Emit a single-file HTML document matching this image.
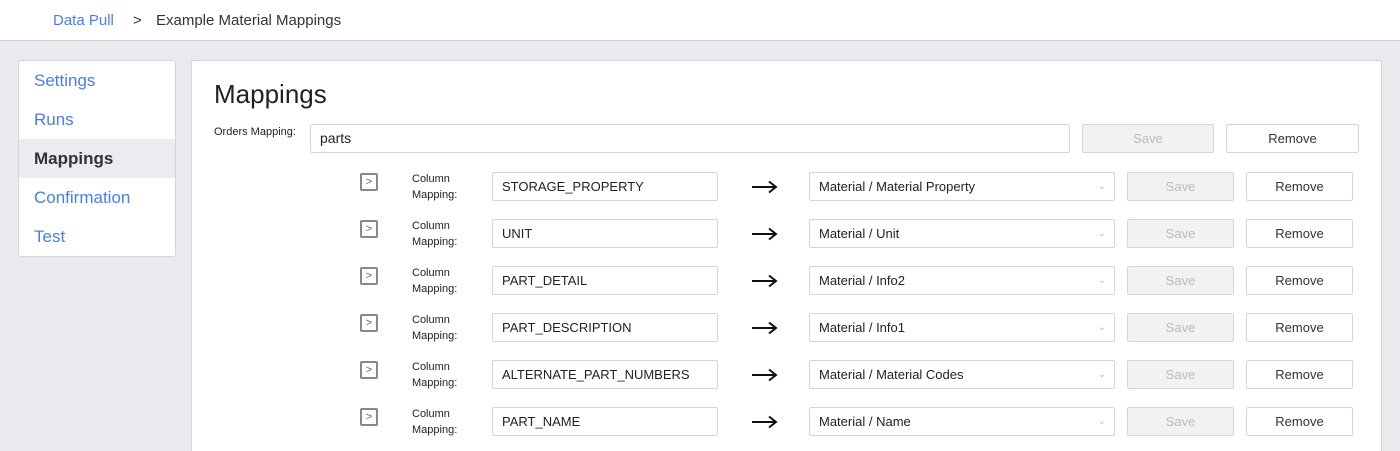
<!DOCTYPE html>
<html style="width:1400px;height:451px;overflow:hidden"><head><style>
*{box-sizing:border-box;margin:0;padding:0}
body{width:1400px;height:451px;overflow:hidden;background:#e9e9ee;font-family:"Liberation Sans",sans-serif;color:#222;position:relative}
.hdr{position:absolute;left:0;top:0;width:1400px;height:41px;background:#fff;border-bottom:1px solid #d0d0d8}
.hdr span{position:absolute;top:12px;font-size:15px}
.side{position:absolute;left:18px;top:60px;width:158px;height:197px;background:#fff;border:1px solid #d4d4dc;border-radius:3px;overflow:hidden}
.side div{height:39px;line-height:39px;padding-left:15px;font-size:17px;color:#4a7cf0}
.side .act{background:#ebebf0;color:#333;font-weight:bold}
.main{position:absolute;left:191px;top:60px;width:1191px;height:391px;background:#fff;border:1px solid #d4d4dc;border-bottom:none;border-radius:3px 3px 0 0}
.a{position:absolute}
.box{position:absolute;border:1px solid #d6d6d6;border-radius:2px;background:#fff;font-size:13px;padding-left:9px;line-height:27px;height:29px}
.btn{position:absolute;border:1px solid #d6d6d6;border-radius:2px;height:29px;line-height:27px;text-align:center;font-size:13px}
.sv{background:#f2f2f2;color:#bbb}
.rm{background:#fff;color:#333}
.lbl{position:absolute;font-size:11px;line-height:16px;color:#222}
.chev{position:absolute;width:18px;height:18px;border:2px solid #888;border-radius:2px;font-size:11px;line-height:14px;text-align:center;color:#666}
.arr{position:absolute}
.dd{position:absolute;right:8px;top:0;color:#bbb;font-size:10px}
</style></head><body>
<div class="hdr"><span style="left:53px;color:#4a7cf0">Data Pull</span><span style="left:133px;color:#333">&gt;</span><span style="left:156px;color:#333">Example Material Mappings</span></div>
<div class="side"><div>Settings</div><div>Runs</div><div class="act">Mappings</div><div>Confirmation</div><div>Test</div></div>
<div class="main"></div>
<div class="a" style="left:214px;top:79px;font-size:26px;color:#222">Mappings</div>
<div class="lbl" style="left:214px;top:124px">Orders Mapping:</div>
<div class="box" style="left:310px;top:124px;width:760px;font-size:14px">parts</div>
<div class="btn sv" style="left:1082px;top:124px;width:132px">Save</div>
<div class="btn rm" style="left:1226px;top:124px;width:133px">Remove</div>
<div id="rows"></div>
<script>
const r=[["STORAGE_PROPERTY","Material / Material Property"],["UNIT","Material / Unit"],["PART_DETAIL","Material / Info2"],["PART_DESCRIPTION","Material / Info1"],["ALTERNATE_PART_NUMBERS","Material / Material Codes"],["PART_NAME","Material / Name"]];
let h="";r.forEach((x,i)=>{const y=172+i*47;
h+=`<div class="chev" style="left:360px;top:${y+1}px">&gt;</div>
<div class="lbl" style="left:412px;top:${y-1}px">Column<br>Mapping:</div>
<div class="box" style="left:492px;top:${y}px;width:226px">${x[0]}</div>
<svg class="arr" style="left:752px;top:${y+8}px" width="26" height="14"><path d="M0 7H24M17 1.5L24 7L17 12.5" stroke="#111" stroke-width="2" fill="none"/></svg>
<div class="box" style="left:809px;top:${y}px;width:306px">${x[1]}<span class="dd">&#8964;</span></div>
<div class="btn sv" style="left:1127px;top:${y}px;width:107px">Save</div>
<div class="btn rm" style="left:1246px;top:${y}px;width:107px">Remove</div>`;});
document.getElementById("rows").innerHTML=h;
</script>
</body></html>
